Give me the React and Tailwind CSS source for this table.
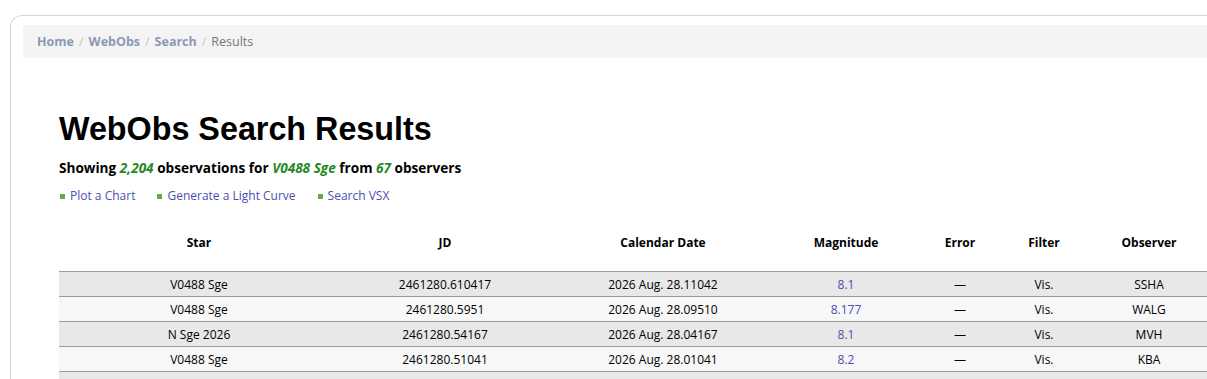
import React from 'react';

const rows = [
  { star: 'V0488 Sge', jd: '2461280.610417', date: '2026 Aug. 28.11042', mag: '8.1', err: '—', filter: 'Vis.', obs: 'SSHA' },
  { star: 'V0488 Sge', jd: '2461280.5951', date: '2026 Aug. 28.09510', mag: '8.177', err: '—', filter: 'Vis.', obs: 'WALG' },
  { star: 'N Sge 2026', jd: '2461280.54167', date: '2026 Aug. 28.04167', mag: '8.1', err: '—', filter: 'Vis.', obs: 'MVH' },
  { star: 'V0488 Sge', jd: '2461280.51041', date: '2026 Aug. 28.01041', mag: '8.2', err: '—', filter: 'Vis.', obs: 'KBA' },
  { star: '', jd: '', date: '', mag: '', err: '', filter: '', obs: '' },
];

const cols = [
  { label: 'Star', w: 'w-[280px]' },
  { label: 'JD', w: 'w-[212px]' },
  { label: 'Calendar Date', w: 'w-[224px]' },
  { label: 'Magnitude', w: 'w-[142px]' },
  { label: 'Error', w: 'w-[86px]' },
  { label: 'Filter', w: 'w-[82px]' },
  { label: 'Observer', w: 'w-[128px]' },
];

const Crumb = ({ children }) => (
  <a href="#" className="font-bold text-[#8b99b3]">{children}</a>
);

const Sep = () => <span className="px-[5px] text-[#c8c8c8]">/</span>;

const Action = ({ children }) => (
  <li className="flex items-center gap-[5px]">
    <span className="inline-block w-[5px] h-[5px] bg-[#6aa84f]" />
    <a href="#" className="text-[#4b4fb0]">{children}</a>
  </li>
);

export default function App() {
  return (
    <div className="w-[1207px] h-[379px] overflow-hidden bg-white font-['Open_Sans',sans-serif] text-[12px] text-black">
      <div className="pl-[10px] pt-[15px]">
        <div className="w-[1240px] border-l border-t border-[#d6d6d6] rounded-tl-[12px] pl-[12px] pt-[9px]">
          <nav className="h-[33px] flex items-center bg-[#f4f4f4] rounded-tl-[4px] px-[14px] pt-[1px] text-[12.5px]">
            <Crumb>Home</Crumb>
            <Sep />
            <Crumb>WebObs</Crumb>
            <Sep />
            <Crumb>Search</Crumb>
            <Sep />
            <span className="text-[#777]">Results</span>
          </nav>

          <div className="pl-[36px] pt-[51px]">
            <h1 className="font-['Liberation_Sans',Arial,sans-serif] font-bold text-[32.3px] leading-[40px]">
              WebObs Search Results
            </h1>
            <p className="mt-[10px] font-bold text-[13.6px] leading-[18px]">
              Showing <em className="text-[#1f8a1f]">2,204</em> observations for{' '}
              <em className="text-[#1f8a1f]">V0488 Sge</em> from{' '}
              <em className="text-[#1f8a1f]">67</em> observers
            </p>
            <ul className="mt-[10px] flex gap-[22px] pl-[1px] leading-[18px]">
              <Action>Plot a Chart</Action>
              <Action>Generate a Light Curve</Action>
              <Action>Search VSX</Action>
            </ul>

            <table className="mt-[21px] border-collapse table-fixed w-[1154px]">
              <thead>
                <tr className="h-[45px]">
                  {cols.map((c) => (
                    <th key={c.label} className={`${c.w} font-bold text-center align-top pt-[8px]`}>
                      {c.label}
                    </th>
                  ))}
                </tr>
              </thead>
              <tbody>
                {rows.map((r, i) => (
                  <tr
                    key={i}
                    className={`h-[25px] border-t border-[#9c9c9c] ${i % 2 === 0 ? 'bg-[#e8e8e8]' : 'bg-[#f7f7f7]'}`}
                  >
                    <td className="text-center pt-[2px]">{r.star}</td>
                    <td className="text-center pt-[2px]">{r.jd}</td>
                    <td className="text-center pt-[2px]">{r.date}</td>
                    <td className="text-center pt-[2px]">
                      <a href="#" className="text-[#4b4fb0]">{r.mag}</a>
                    </td>
                    <td className="text-center pt-[2px]">{r.err}</td>
                    <td className="text-center pt-[2px]">{r.filter}</td>
                    <td className="text-center pt-[2px]">{r.obs}</td>
                  </tr>
                ))}
              </tbody>
            </table>
          </div>
        </div>
      </div>
    </div>
  );
}
